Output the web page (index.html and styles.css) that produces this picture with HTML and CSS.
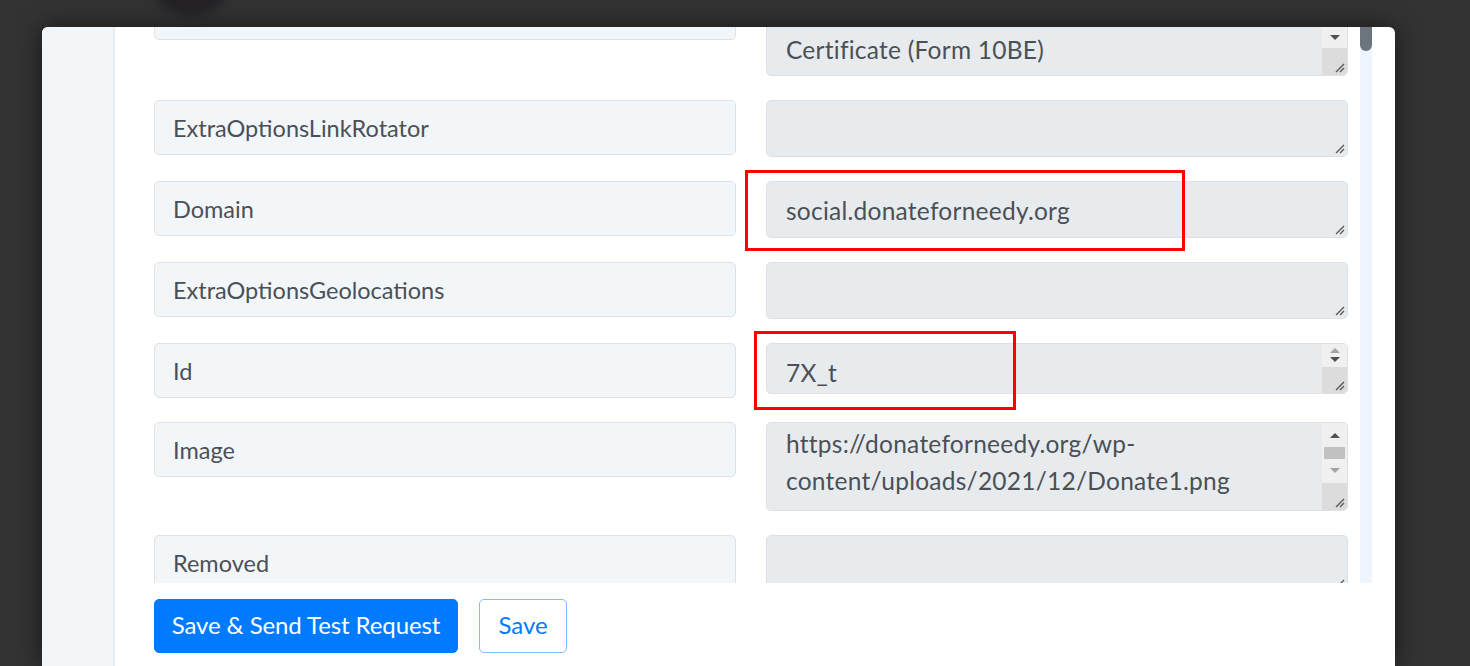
FILE: index.html
```html
<!DOCTYPE html>
<html lang="en">

<head>
    <meta charset="UTF-8">
    <meta name="viewport" content="width=device-width, initial-scale=1.0">
    <title>Field Mapping</title>
    <link rel="stylesheet" href="styles.css">
</head>

<body>
    <div class="backdrop-avatar"></div>

    <div class="modal">
        <aside class="modal-rail"></aside>

        <div class="modal-main">
            <div class="modal-body">
                <div class="mapping-list">

                    <div class="map-row">
                        <div class="field-key"></div>
                        <div class="field-value tall">
                            <div class="value-text shift-sm"><br>Certificate (Form 10BE)</div>
                            <div class="value-scroll">
                                <div class="sb-fill"></div>
                                <div class="sb-btn"><span class="arrow-down"></span></div>
                                <div class="sb-corner"></div>
                            </div>
                            <svg class="grip" viewBox="0 0 12 12"><path d="M11 3 3 11M11 7 7 11" /></svg>
                        </div>
                    </div>

                    <div class="map-row">
                        <div class="field-key">ExtraOptionsLinkRotator</div>
                        <div class="field-value">
                            <div class="value-text"></div>
                            <svg class="grip" viewBox="0 0 12 12"><path d="M11 3 3 11M11 7 7 11" /></svg>
                        </div>
                    </div>

                    <div class="map-row">
                        <div class="field-key">Domain</div>
                        <div class="field-value">
                            <div class="value-text">social.donateforneedy.org</div>
                            <svg class="grip" viewBox="0 0 12 12"><path d="M11 3 3 11M11 7 7 11" /></svg>
                        </div>
                        <div class="callout callout-domain"></div>
                    </div>

                    <div class="map-row">
                        <div class="field-key">ExtraOptionsGeolocations</div>
                        <div class="field-value">
                            <div class="value-text"></div>
                            <svg class="grip" viewBox="0 0 12 12"><path d="M11 3 3 11M11 7 7 11" /></svg>
                        </div>
                    </div>

                    <div class="map-row">
                        <div class="field-key">Id</div>
                        <div class="field-value short">
                            <div class="value-text">7X_t</div>
                            <div class="value-scroll">
                                <div class="sb-spin">
                                    <span class="arrow-up light"></span>
                                    <span class="arrow-down"></span>
                                </div>
                                <div class="sb-corner"></div>
                            </div>
                            <svg class="grip" viewBox="0 0 12 12"><path d="M11 3 3 11M11 7 7 11" /></svg>
                        </div>
                        <div class="callout callout-id"></div>
                    </div>

                    <div class="map-row">
                        <div class="field-key">Image</div>
                        <div class="field-value double">
                            <div class="value-text shift-md">https://donateforneedy.org/wp-<br>content/uploads/2021/12/Donate1.png</div>
                            <div class="value-scroll">
                                <div class="sb-btn up"><span class="arrow-up"></span></div>
                                <div class="sb-thumb"></div>
                                <div class="sb-btn"><span class="arrow-down light"></span></div>
                                <div class="sb-corner"></div>
                            </div>
                            <svg class="grip" viewBox="0 0 12 12"><path d="M11 3 3 11M11 7 7 11" /></svg>
                        </div>
                    </div>

                    <div class="map-row">
                        <div class="field-key">Removed</div>
                        <div class="field-value">
                            <div class="value-text"></div>
                            <svg class="grip" viewBox="0 0 12 12"><path d="M11 3 3 11M11 7 7 11" /></svg>
                        </div>
                    </div>

                </div>

                <div class="body-scrollbar">
                    <div class="body-thumb"></div>
                </div>
            </div>

            <div class="modal-footer">
                <button type="button" class="btn btn-primary">Save &amp; Send Test Request</button>
                <button type="button" class="btn btn-outline">Save</button>
            </div>
        </div>
    </div>
</body>

</html>
```

FILE: styles.css
```css
body {
    font-family: Lato, "Open Sans", Arial, sans-serif;
    margin: 0;
    padding: 0;
    background-color: #333333;
    height: 666px;
    overflow: hidden;
    position: relative;
}

/* blurred avatar from the page behind the dialog */
.backdrop-avatar {
    position: absolute;
    left: 152px;
    top: -42px;
    width: 76px;
    height: 58px;
    border-radius: 50%;
    background-color: #242227;
    filter: blur(5px);
}

.modal {
    position: relative;
    display: flex;
    margin: 27px 0 0 42px;
    width: 1353px;
    height: 639px;
    background-color: #ffffff;
    border-radius: 6px 6px 0 0;
    box-shadow: 0 0 26px rgba(0, 0, 0, 0.55);
    overflow: hidden;
}

.modal-rail {
    width: 71px;
    background-color: #f3f6f9;
    border-right: 2px solid #e9ecef;
}

.modal-main {
    flex: 1;
    min-width: 0;
    display: flex;
    flex-direction: column;
}

.modal-body {
    height: 556px;
    display: flex;
    overflow: hidden;
}

.mapping-list {
    flex: 1;
    align-self: flex-start;
    display: flex;
    flex-direction: column;
    gap: 24px;
    margin-top: -42px;
    padding: 0 12px 0 39px;
}

.map-row {
    position: relative;
    display: grid;
    grid-template-columns: 582px 582px;
    column-gap: 30px;
    align-items: start;
}

.field-key {
    box-sizing: border-box;
    height: 55px;
    display: flex;
    align-items: center;
    padding: 0 18px;
    background-color: #f3f6f9;
    border: 1px solid #dde2e7;
    border-radius: 5px;
    color: #4b5056;
    font-size: 23.5px;
}

.field-value {
    position: relative;
    box-sizing: border-box;
    height: 57px;
    display: flex;
    background-color: #e8ebee;
    border: 1px solid #dde1e5;
    border-radius: 5px;
    overflow: hidden;
}

.field-value.tall {
    height: 91px;
}

.field-value.short {
    height: 51px;
}

.field-value.double {
    height: 89px;
}

.value-text {
    flex: 1;
    padding: 10px 19px;
    color: #4b5056;
    font-size: 24.5px;
    letter-spacing: 0.25px;
    line-height: 37px;
    white-space: nowrap;
    overflow: hidden;
}

.shift-sm {
    margin-top: -2px;
}

.shift-md {
    margin-top: -8px;
}

/* native-looking textarea scrollbar */
.value-scroll {
    width: 25px;
    display: flex;
    flex-direction: column;
    background-color: #f0f0f0;
}

.sb-fill {
    flex: 1;
}

.sb-btn {
    height: 22px;
    display: flex;
    align-items: center;
    justify-content: center;
}

.sb-btn.up {
    height: 24px;
}

.sb-spin {
    height: 23px;
    display: flex;
    flex-direction: column;
    align-items: center;
    justify-content: center;
    gap: 4px;
}

.sb-thumb {
    height: 12px;
    margin: 0 2px;
    background-color: #c1c1c1;
}

.sb-corner {
    margin-top: auto;
    height: 27px;
    background-color: #dcdcdc;
}

.arrow-up,
.arrow-down {
    width: 0;
    height: 0;
    border-left: 5px solid transparent;
    border-right: 5px solid transparent;
}

.arrow-up {
    border-bottom: 5px solid #505050;
}

.arrow-down {
    border-top: 5px solid #505050;
}

.arrow-up.light {
    border-bottom-color: #a3a3a3;
}

.arrow-down.light {
    border-top-color: #a3a3a3;
}

.grip {
    position: absolute;
    right: 2px;
    bottom: 2px;
    width: 12px;
    height: 12px;
    fill: none;
    stroke: #555555;
    stroke-width: 1.3;
}

.callout {
    position: absolute;
    box-sizing: border-box;
    border: 3px solid #ff0000;
}

.callout-domain {
    left: 591px;
    top: -11px;
    width: 440px;
    height: 81px;
}

.callout-id {
    left: 600px;
    top: -12px;
    width: 262px;
    height: 79px;
}

.body-scrollbar {
    width: 12px;
    margin-right: 23px;
    background-color: #eef5fd;
}

.body-thumb {
    height: 24px;
    background-color: #6c747e;
    border-radius: 0 0 6px 6px;
}

.modal-footer {
    display: flex;
    gap: 21px;
    padding: 16px 0 0 39px;
}

.btn {
    box-sizing: border-box;
    height: 54px;
    padding: 0 12px 4px;
    border-radius: 5px;
    font-family: Lato, "Open Sans", Arial, sans-serif;
    font-size: 24px;
    cursor: pointer;
}

.btn-primary {
    width: 304px;
    background-color: #007bff;
    border: 1px solid #007bff;
    color: #ffffff;
    letter-spacing: -0.1px;
}

.btn-outline {
    width: 88px;
    background-color: #ffffff;
    border: 1px solid #80bdff;
    color: #007bff;
}
```
